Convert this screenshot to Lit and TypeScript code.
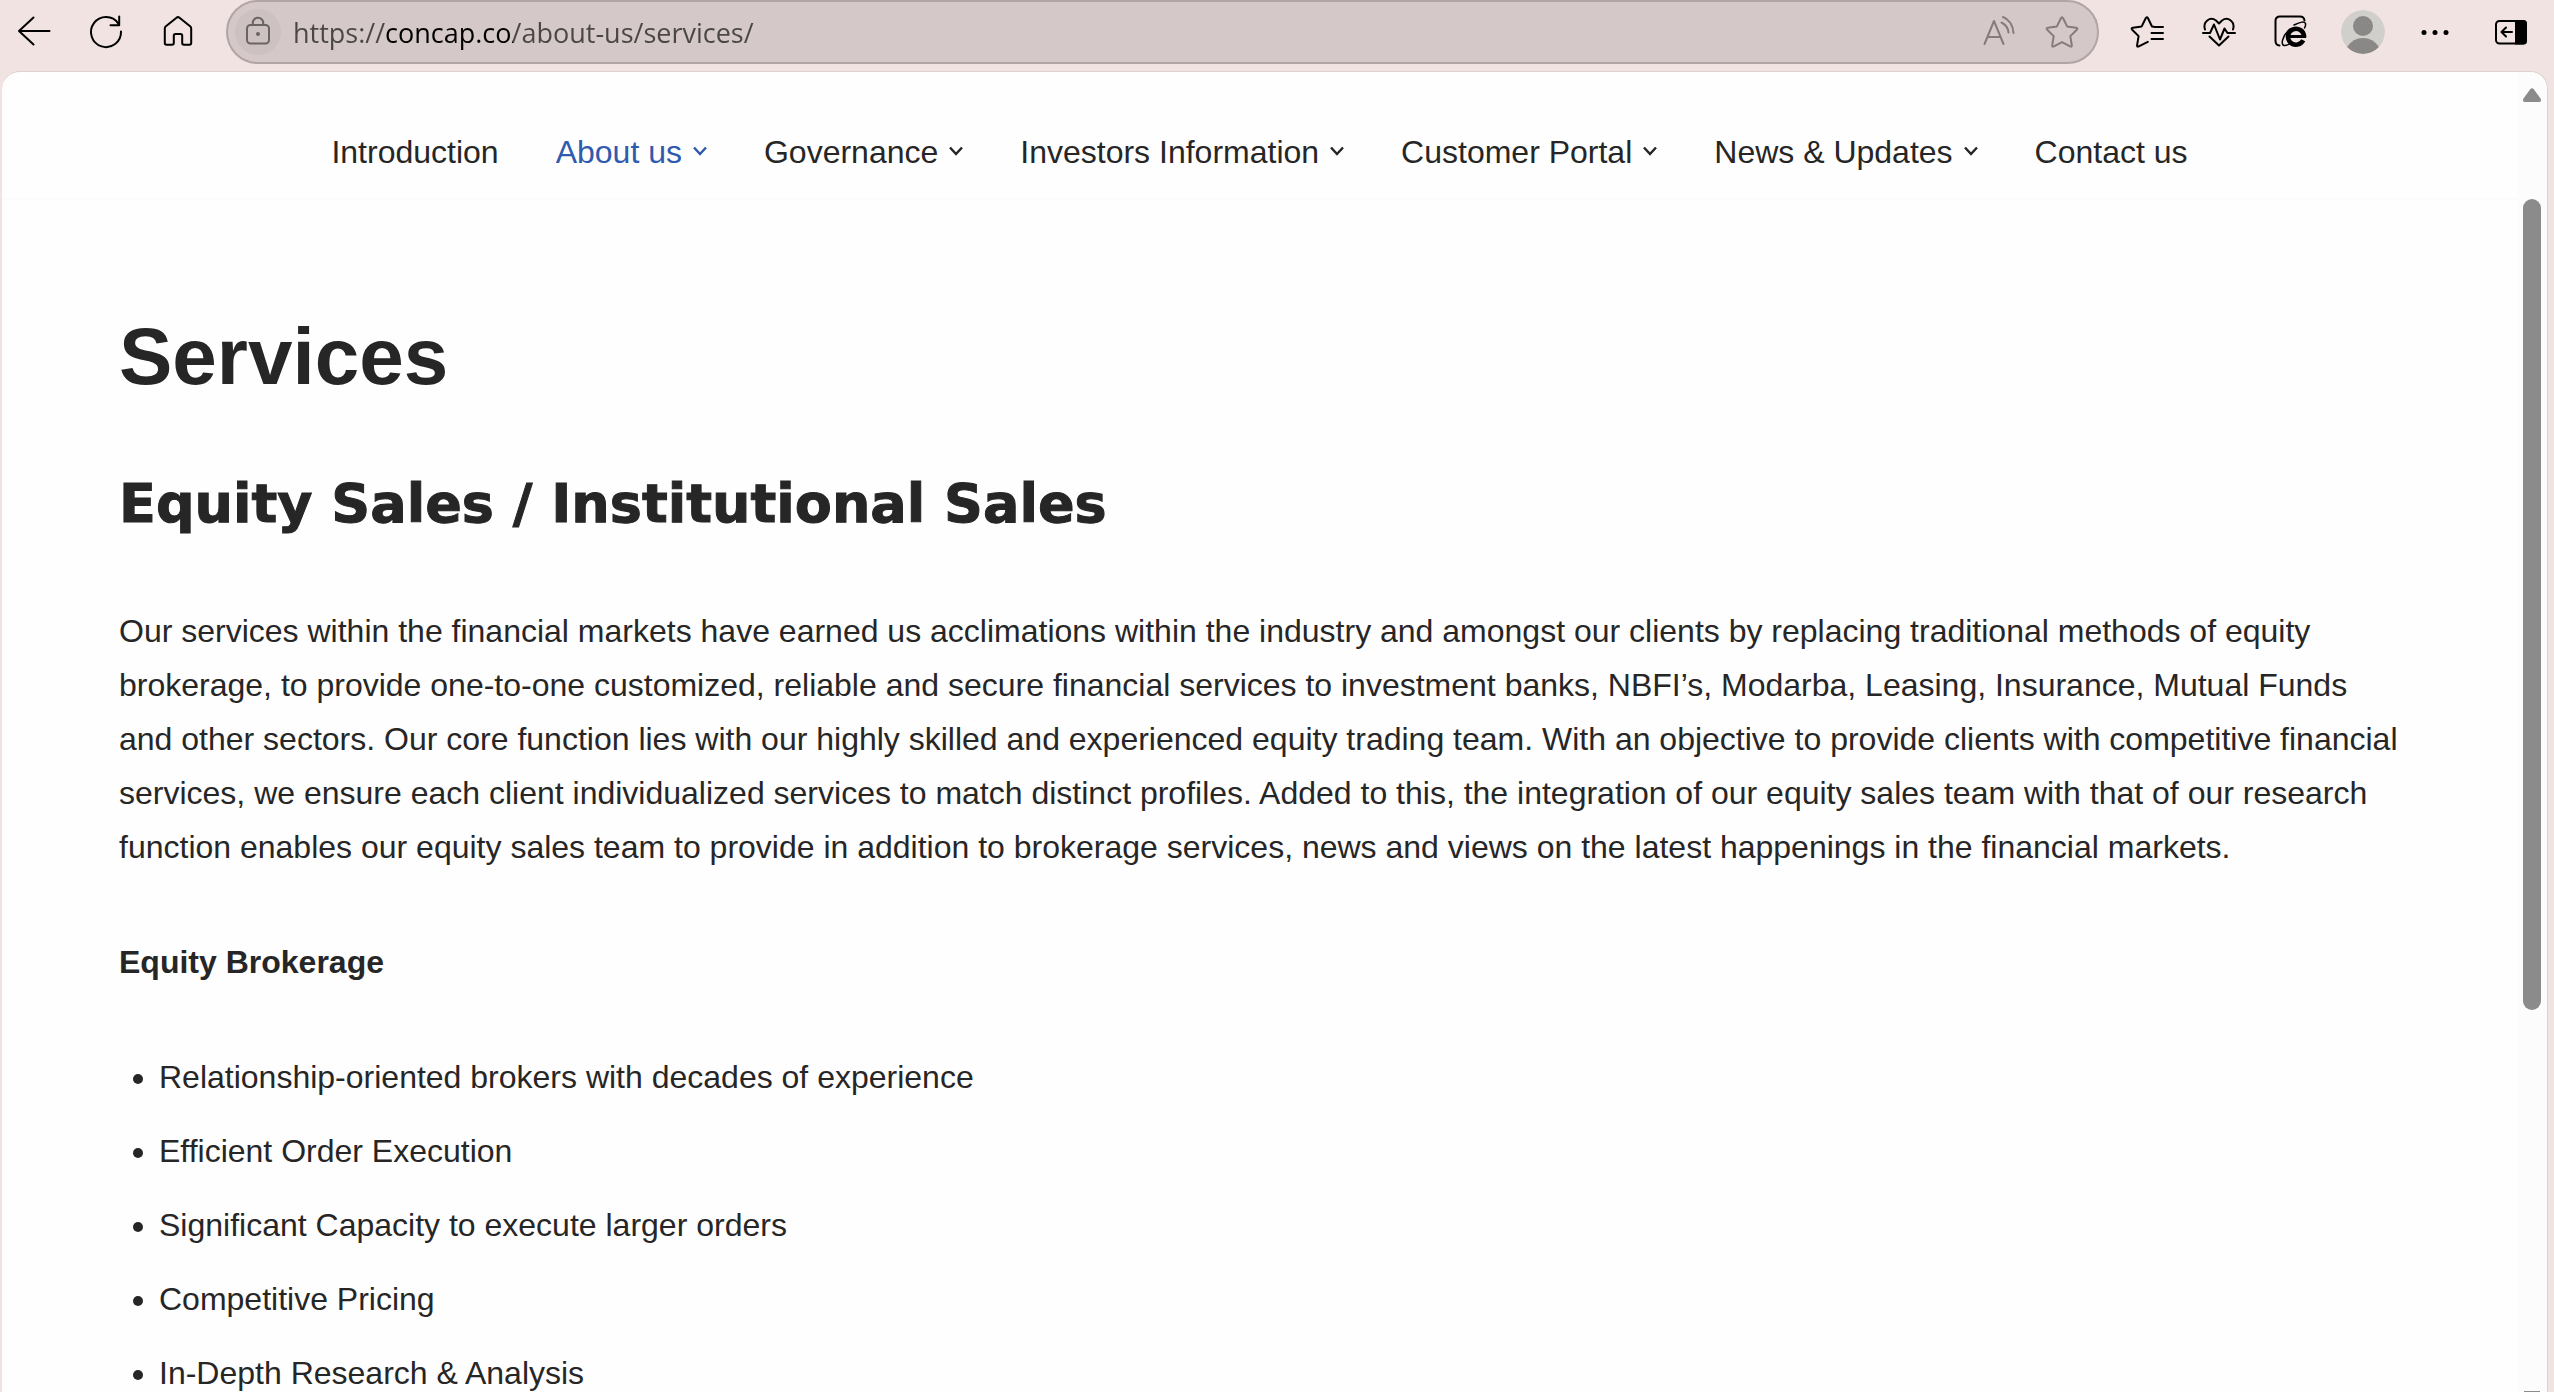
import { LitElement, html, css, svg } from "lit";
import { customElement } from "lit/decorators.js";

const icons = {
  back: svg`<path d="M33.5 17H3M17.5 3.5L3 17l14.5 13.5"/>`,
  reload: svg`<path d="M33 17.5A15 15 0 1 1 30.4 9.6M31.2 2.5v8.7h-8.7"/>`,
  home: svg`<path d="M16.5 3.7L5.6 12.6Q4.8 13.3 4.8 14.4V29q0 1.8 1.8 1.8H12q1.8 0 1.8-1.8v-7.4q0-1.7 1.7-1.7h5q1.7 0 1.7 1.7V29q0 1.8 1.8 1.8h5.4q1.8 0 1.8-1.8V14.4q0-1.1-.8-1.8L19.5 3.7Q18 2.5 16.5 3.7z"/>`,
  lock: svg`<rect x="7" y="11" width="22" height="18.5" rx="3.5"/><path d="M12.8 11V9a5.2 5.2 0 0 1 10.4 0v2"/><circle cx="18" cy="20" r="2" fill="currentColor" stroke="none"/>`,
  read: svg`<path d="M3.5 30L13 7l9.5 23M7 23h12M22 3c6 2.2 10.3 8.5 10.5 16M20.5 8.5c4 2 6.6 5.5 7 10"/>`,
  star: svg`<path d="M16.9 4.2q1.1-2 2.2 0l4 8.2 9 1.3q2.2.4.7 2l-6.5 6.4 1.5 9q.3 2.2-1.7 1.3L18 28.2l-8.1 4.2q-2 .9-1.7-1.3l1.5-9-6.5-6.4q-1.5-1.6.7-2l9-1.3z"/>`,
  favorites: svg`<path d="M26 13h8M22.5 19H34M22.5 25H34M26 13l-3-.5-4-8.3q-1.2-2-2.3 0l-4 8.2-8.8 1.3q-2.2.4-.7 2l6.4 6.4-1.5 9q-.3 2.2 1.7 1.3l9-4.5"/>`,
  heart: svg`<path d="M4 15.5C1.500 8 9 2 15 6.500l3 3 3-3C27 2 34.500 8 32 15.500M2 19h7l4-8.500 6 15 4.500-11L26.500 19H34M8.500 22.500L18 31.500l9.500-9"/>`,
  edgeMode: svg`<path d="M6.500 31.500Q2.500 31 2.500 27V7q0-4.500 4.500-4.500h20q4 0 4.500 4"/><g stroke-linecap="butt"><path stroke-width="4.500" d="M30.200 26.200A8 8 0 1 1 31 22.500"/><path stroke-width="3" d="M16 22.500h17.200"/></g><path stroke-width="1.500" d="M17 15C9 22 7 32 12 31.500q3-.3 5-2M21 11q10-5 11.500-1.500.4 2-1 4.500"/>`,
  dots: svg`<g fill="currentColor" stroke="none"><circle cx="7" cy="18.500" r="2.500"/><circle cx="18" cy="18.500" r="2.500"/><circle cx="29" cy="18.500" r="2.500"/></g>`,
  sidebar: svg`<rect x="3" y="7" width="30" height="22.500" rx="3.500"/><path fill="currentColor" stroke="none" d="M22 6h8.500Q34 6 34 9.500V27q0 3.500-3.500 3.500H22z"/><path d="M19 18H9M13 13.500L8.500 18l4.500 4.500"/>`,
};

const icon = (shape: unknown) =>
  html`<svg class="icon" viewBox="0 0 36 36" aria-hidden="true">${shape}</svg>`;

@customElement("browser-toolbar")
class BrowserToolbar extends LitElement {
  static styles = css`
    :host {
      display: block;
      font-family: "Open Sans", "Noto Sans", sans-serif;
    }
    .toolbar {
      display: flex;
      align-items: center;
      height: 64px;
      padding: 0 15px 0 6px;
    }
    .group {
      display: flex;
      gap: 16px;
    }
    button {
      display: flex;
      align-items: center;
      justify-content: center;
      flex: none;
      width: 56px;
      height: 56px;
      padding: 0;
      border: 0;
      background: none;
      color: #000;
    }
    .icon {
      width: 36px;
      height: 36px;
      fill: none;
      stroke: currentColor;
      stroke-width: 2;
      stroke-linecap: round;
      stroke-linejoin: round;
    }
    .address {
      display: flex;
      align-items: center;
      flex: 1;
      box-sizing: border-box;
      height: 64px;
      margin: 0 20px;
      padding: 0 12px 0 7px;
      border: 2px solid #b2a4a4;
      border-radius: 32px;
      background: #d5c8c8;
    }
    .address button {
      width: 46px;
      height: 46px;
      color: #857b7b;
    }
    .address .site {
      border-radius: 23px;
      background: #cdc1c1;
      color: #6b6464;
    }
    .tools {
      display: flex;
      gap: 17px;
    }
    .url {
      flex: 1;
      min-width: 0;
      height: 48px;
      margin: 0 12px;
      padding: 0;
      border: 0;
      outline: 0;
      background: linear-gradient(
        to right,
        #4a4646 92px,
        #000 92px,
        #000 220px,
        #4a4646 220px
      );
      -webkit-background-clip: text;
      background-clip: text;
      color: transparent;
      font: 400 27px "Open Sans", "Noto Sans", sans-serif;
    }
    .avatar {
      width: 44px;
      height: 44px;
      border-radius: 22px;
    }
    .more {
      margin-right: 4px;
    }
  `;

  render() {
    return html`
      <div class="toolbar">
        <div class="group">
          <button aria-label="Back">${icon(icons.back)}</button>
          <button aria-label="Refresh">${icon(icons.reload)}</button>
          <button aria-label="Home">${icon(icons.home)}</button>
        </div>
        <div class="address">
          <button class="site" aria-label="View site information">${icon(icons.lock)}</button>
          <input class="url" type="text" aria-label="Address" value="https://concap.co/about-us/services/" />
          <div class="tools">
            <button aria-label="Read aloud">${icon(icons.read)}</button>
            <button aria-label="Add to favorites">${icon(icons.star)}</button>
          </div>
        </div>
        <div class="group">
          <button aria-label="Favorites">${icon(icons.favorites)}</button>
          <button aria-label="Browser essentials">${icon(icons.heart)}</button>
          <button aria-label="Internet Explorer mode">${icon(icons.edgeMode)}</button>
          <button aria-label="Profile">
            <svg class="avatar" viewBox="0 0 44 44" aria-hidden="true">
              <circle cx="22" cy="22" r="22" fill="#d1cfcb" />
              <circle cx="22" cy="16" r="10" fill="#8a8886" />
              <path fill="#8a8886" d="M6 37Q12 28 22 28t16 9Q32 44 22 44T6 37z" />
            </svg>
          </button>
          <button class="more" aria-label="Settings and more">${icon(icons.dots)}</button>
          <button aria-label="Sidebar">${icon(icons.sidebar)}</button>
        </div>
      </div>
    `;
  }
}

interface NavItem {
  label: string;
  menu?: boolean;
  active?: boolean;
}

@customElement("site-header")
class SiteHeader extends LitElement {
  static styles = css`
    :host {
      display: block;
    }
    .nav {
      display: flex;
      justify-content: center;
      gap: 57px;
      padding: 53px 0 19px;
      border-bottom: 2px solid #fbfbfb;
    }
    .link {
      display: flex;
      align-items: center;
      gap: 11px;
      color: #272626;
      font-size: 32px;
      line-height: 54px;
      text-decoration: none;
      white-space: nowrap;
    }
    .active {
      color: #2f5aae;
    }
    .chevron {
      width: 14px;
      height: 14px;
      fill: none;
      stroke: currentColor;
      stroke-width: 2.5;
    }
  `;

  private items: NavItem[] = [
    { label: "Introduction" },
    { label: "About us", menu: true, active: true },
    { label: "Governance", menu: true },
    { label: "Investors Information", menu: true },
    { label: "Customer Portal", menu: true },
    { label: "News & Updates", menu: true },
    { label: "Contact us" },
  ];

  render() {
    return html`
      <nav class="nav" aria-label="Main">
        ${this.items.map(
          (item) => html`<a class="link ${item.active ? "active" : ""}" href="#"
            >${item.label}${item.menu
              ? html`<svg class="chevron" viewBox="0 0 14 14" aria-hidden="true">
                  <path d="M1 2.5L7 9l6-6.5" />
                </svg>`
              : ""}</a
          >`
        )}
      </nav>
    `;
  }
}

@customElement("app-root")
class AppRoot extends LitElement {
  static styles = css`
    :host {
      display: flex;
      flex-direction: column;
      height: 100vh;
      overflow: hidden;
      background: #f0e3e1;
      color: #272626;
      font-family: "Liberation Sans", Arial, sans-serif;
    }
    .toolbar {
      flex: none;
    }
    .window {
      display: flex;
      flex: 1;
      min-height: 0;
      margin: 7px 6px 0 2px;
      border: solid #ddd0cf;
      border-width: 1px 1px 0 0;
      border-radius: 18px 18px 0 0;
      background: #fefefe;
      overflow: hidden;
    }
    .page {
      flex: 1;
      min-width: 0;
      overflow: hidden;
    }
    .content {
      padding: 105px 112px 0 117px;
      font-size: 32px;
      line-height: 54px;
    }
    h1,
    h2,
    p,
    ul {
      margin: 0;
    }
    h1 {
      font-size: 80px;
      line-height: 104px;
    }
    h2 {
      margin-top: 59px;
      font-family: "Arial Black", "DejaVu Sans", sans-serif;
      font-size: 54px;
      font-weight: 900;
      line-height: 72px;
      -webkit-text-stroke: 1px currentColor;
    }
    .intro {
      margin-top: 64px;
    }
    .subtitle {
      margin-top: 61px;
      font-weight: 700;
    }
    .list {
      display: flex;
      flex-direction: column;
      gap: 20px;
      margin-top: 61px;
      padding-left: 40px;
    }
    .scrollbar {
      display: flex;
      flex-direction: column;
      align-items: center;
      justify-content: space-between;
      flex: none;
      width: 30px;
      padding-top: 16px;
      background: #fcfcfc;
    }
    .track {
      flex: 1;
      width: 18px;
      padding-top: 97px;
    }
    .thumb {
      height: 68%;
      border-radius: 9px;
      background: #8b8b8b;
    }
    .arrow {
      width: 18px;
      height: 14px;
      fill: #8b8b8b;
    }
    .end {
      height: 1px;
      width: 16px;
      background: #8b8b8b;
    }
  `;

  private services = [
    "Relationship-oriented brokers with decades of experience",
    "Efficient Order Execution",
    "Significant Capacity to execute larger orders",
    "Competitive Pricing",
    "In-Depth Research & Analysis",
  ];

  render() {
    return html`
      <browser-toolbar class="toolbar"></browser-toolbar>
      <div class="window">
        <div class="page">
          <site-header></site-header>
          <main class="content">
            <h1>Services</h1>
            <h2>Equity Sales / Institutional Sales</h2>
            <p class="intro">
              Our services within the financial markets have earned us acclimations within the industry and amongst our
              clients by replacing traditional methods of equity brokerage, to provide one-to-one customized, reliable
              and secure financial services to investment banks, NBFI’s, Modarba, Leasing, Insurance, Mutual Funds and
              other sectors. Our core function lies with our highly skilled and experienced equity trading team. With an
              objective to provide clients with competitive financial services, we ensure each client individualized
              services to match distinct profiles. Added to this, the integration of our equity sales team with that of
              our research function enables our equity sales team to provide in addition to brokerage services, news and
              views on the latest happenings in the financial markets.
            </p>
            <p class="subtitle">Equity Brokerage</p>
            <ul class="list">
              ${this.services.map((service) => html`<li>${service}</li>`)}
            </ul>
          </main>
        </div>
        <div class="scrollbar" aria-hidden="true">
          <svg class="arrow" viewBox="0 0 18 14">
            <path d="M7 1.5Q9-1 11 1.5l6.5 9Q19 14 16 14H2Q-1 14 .5 10.5z" />
          </svg>
          <div class="track"><div class="thumb"></div></div>
          <div class="end"></div>
        </div>
      </div>
    `;
  }
}
